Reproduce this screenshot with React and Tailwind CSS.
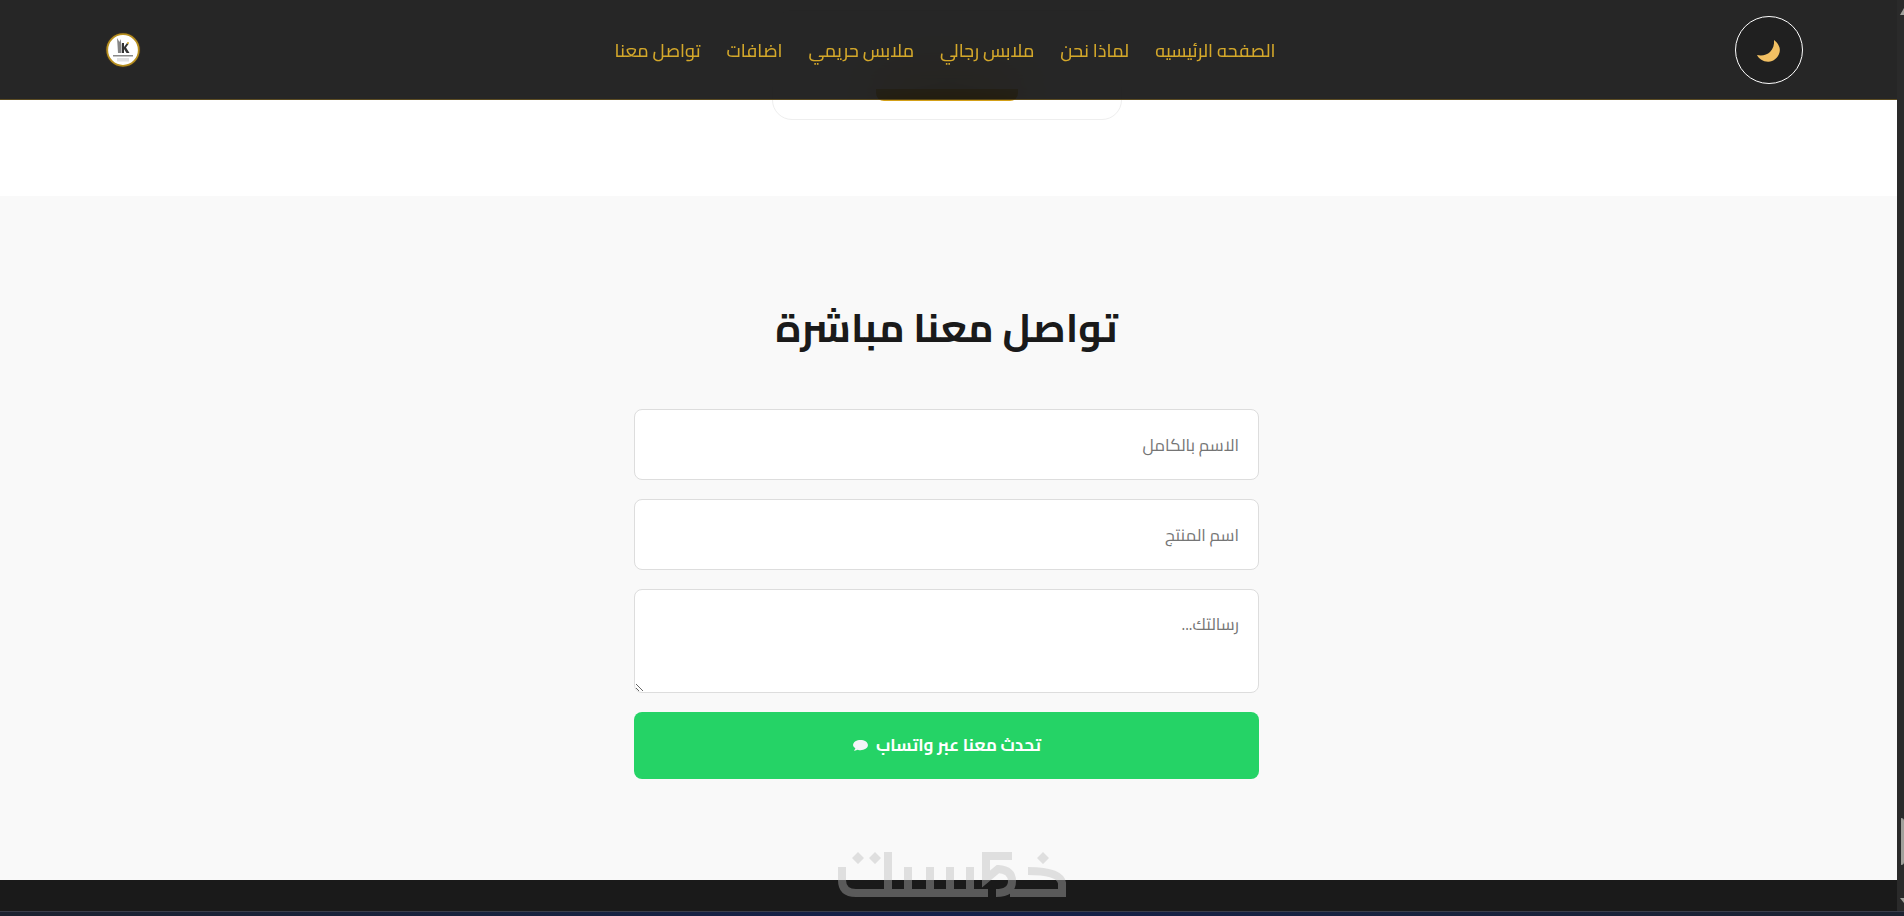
const navItems = ['الصفحه الرئيسيه', 'لماذا نحن', 'ملابس رجالي', 'ملابس حريمي', 'اضافات', 'تواصل معنا'];

function Logo() {
  return (
    <svg viewBox="0 0 36 36" className="w-9 h-9" aria-label="logo">
      <circle cx="18" cy="18" r="17.500" fill="#3a3020" />
      <circle cx="18" cy="18" r="15.800" fill="#fff" stroke="#b8901f" strokeWidth="1.800" />
      <path d="M12 6l2.500 4 1-3 1 6v8h-3.500l-.5-8z" fill="#858585" />
      <path d="M17 11h2v4l3-4 1.500 1-2.500 3.500 3.500 5.500h-3l-2.500-4v4h-2z" fill="#333" />
      <circle cx="23" cy="11" r="1" fill="#d4a82a" />
      <rect x="8" y="23" width="20" height="1.500" fill="#8a8a8a" />
      <rect x="12" y="26" width="12" height="3.500" fill="#e2e2e2" />
    </svg>
  );
}

function Moon() {
  return (
    <svg viewBox="0 0 24 23" className="w-6 h-[23px] mt-1">
      <path d="M17 0C21 3 24 8 22.500 12.500 21 18 16 22 11 21.700 6 21.500 2 19 0 15 5 16 10 15 13 12 16 9 17.500 5 17 0z" fill="#f2c063" />
    </svg>
  );
}

function Watermark() {
  return (
    <svg viewBox="0 0 228 50" className="absolute left-[838px] top-[850px] w-[228px] h-[50px]" aria-label="khamsat logo">
      <g opacity="0.4" fill="none" stroke="#bababa" strokeWidth="8">
        <path d="M4 17V30Q4 43 18 43H150" />
        <path d="M50 2V43M70 17V43M92 17V43M112 17V43M132 17V43" />
        <path d="M144 6H174M148 3V29L160 19Q174 20 174 31 174 43 158 43" />
        <path d="M172 43H224V33Q222 21 190 21" />
        <g fill="#bababa" stroke="none">
          <path d="M20 2l6 6-6 6-6-6zM37 2l6 6-6 6-6-6zM205 2l6 6-6 6-6-6z" />
        </g>
      </g>
    </svg>
  );
}

export default function App() {
  return (
    <div dir="rtl" className="relative flex h-[916px] overflow-hidden bg-[#2a2a2a] font-['Cairo','Noto_Sans_Arabic','DejaVu_Sans',sans-serif]">
      <div className="w-[7px] shrink-0 bg-[#2a2a2a] flex flex-col items-start pt-[8px]">
        <svg viewBox="0 0 4 7" className="w-1 h-[7px]"><path d="M4 0v7H0z" fill="#a0a09a" /></svg>
        <div className="w-[3px] h-[47px] mt-[803px] bg-[#a0a09a] rounded-r-sm"></div>
        <svg viewBox="0 0 4 5" className="w-1 h-[5px] mt-[33px]"><path d="M0 0h4v5z" fill="#a0a09a" /></svg>
      </div>
      <main className="flex-1">
        <section className="h-[196px] bg-white flex flex-col items-center justify-end pb-[76px] pr-1">
          <div className="w-[350px] h-[110px] bg-white border border-[#eeeeee] rounded-[20px] flex flex-col items-center justify-end pb-[18px]">
            <div className="w-[142px] h-[12px] rounded-b-lg bg-[#d4a017]"></div>
          </div>
        </section>
        <section className="h-[684px] bg-[#f9f9f9] flex flex-col items-center pt-[102px] pr-1">
          <h2 className="text-[40px] leading-[60px] font-bold text-[#1a1a1a]">تواصل معنا مباشرة</h2>
          <form className="w-[625px] flex flex-col gap-[19px] mt-[51px]">
            <input placeholder="الاسم بالكامل" className="h-[71px] px-[19px] bg-white border border-[#dddddd] rounded-lg text-[16.8px] placeholder:text-[#757575]" />
            <input placeholder="اسم المنتج" className="h-[71px] px-[19px] bg-white border border-[#dddddd] rounded-lg text-[16.8px] placeholder:text-[#757575]" />
            <textarea placeholder="رسالتك..." className="h-[104px] px-[19px] pt-[22px] bg-white border border-[#dddddd] rounded-lg text-[16.8px] placeholder:text-[#757575]"></textarea>
            <button type="button" className="h-[67px] rounded-lg bg-[#25d366] text-white font-bold text-[17px] flex items-center justify-center gap-[7px]">
              <span>تحدث معنا عبر واتساب</span>
              <svg viewBox="0 0 18 14" className="w-[17px] h-[13px]">
                <path d="M9 1c4 0 8 2 8 5.500S13 12 9 12c-1 0-2 0-3-.5L2 13l1.500-3C2 9 1 8 1 6.500 1 3 5 1 9 1z" fill="#f4f4f8" />
              </svg>
            </button>
          </form>
        </section>
        <footer className="h-[31px] bg-[#1a1a1a]"></footer>
      </main>

      <Watermark />

      <header className="absolute top-0 left-0 right-[7px] h-[100px] bg-black/85 backdrop-blur-[30px] border-b border-[#d4a017]/30 flex items-center justify-between pl-[105px] pr-[94px]">
        <button className="w-[68px] h-[68px] rounded-full border border-white bg-[#202020] flex items-center justify-center">
          <Moon />
        </button>
        <nav className="flex items-center gap-[26px] mt-0.5 -mr-[14px] text-[18px] font-medium text-[#d4a82a]">
          {navItems.map(item => (
            <a key={item} href="#">{item}</a>
          ))}
        </nav>
        <Logo />
      </header>

      <div className="absolute left-0 right-0 bottom-0 h-[5px] bg-linear-to-r from-[#1c2230] via-[#14204a] to-[#1c2230] border-t border-[#3a3d4a]"></div>
    </div>
  );
}
